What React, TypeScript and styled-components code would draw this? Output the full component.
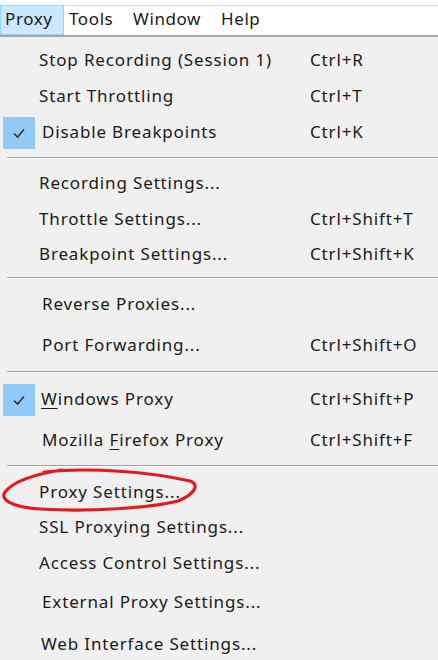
import React from "react";
import styled, { createGlobalStyle } from "styled-components";

const GlobalStyle = createGlobalStyle`
  html, body {
    margin: 0;
    padding: 0;
    background: #ffffff;
  }
  body {
    font-family: "Noto Sans", "Open Sans", sans-serif;
    color: #1a1a1a;
  }
`;

const Page = styled.div`
  width: 438px;
  height: 660px;
  overflow: hidden;
  background: #ffffff;
  padding-top: 5px;
  box-sizing: border-box;
`;

const MenuBar = styled.div`
  display: flex;
  align-items: stretch;
  height: 29px;
  border-top: 1px solid #dadada;
  border-bottom: 2px solid #a8a8a8;
  background: #ffffff;
`;

const MenuBarItem = styled.div<{ active?: boolean; w: number }>`
  display: flex;
  align-items: center;
  width: ${(p) => p.w}px;
  padding: 0 0 3px 4px;
  box-sizing: border-box;
  font-size: 17px;
  letter-spacing: 0.6px;
  background: ${(p) => (p.active ? "#cce8ff" : "transparent")};
  border: 1px solid ${(p) => (p.active ? "#99d1ff" : "transparent")};
  margin-top: -1px;
`;

const Panel = styled.div`
  background: #f0f0f0;
  padding-top: 6px;
  height: 100%;
`;

const Row = styled.div<{ h: number }>`
  position: relative;
  display: flex;
  align-items: center;
  height: ${(p) => p.h}px;
  font-size: 17px;
  letter-spacing: 0.85px;
`;

const CheckSlot = styled.div<{ checked?: boolean }>`
  flex: none;
  width: 32px;
  height: 32px;
  margin: 0 4px 0 3px;
  display: flex;
  align-items: center;
  justify-content: center;
  background: ${(p) => (p.checked ? "#91c9f7" : "transparent")};
`;

const Label = styled.div<{ shift: number }>`
  width: 271px;
  padding: 0 0 3px ${(p) => p.shift}px;
  box-sizing: border-box;
  white-space: nowrap;
`;

const Shortcut = styled.div`
  white-space: nowrap;
  padding-bottom: 3px;
`;

const Mnemonic = styled.span`
  text-decoration: underline;
  text-underline-offset: 3px;
`;

const Separator = styled.div<{ top: number; bottom: number }>`
  margin: ${(p) => p.top}px 0 ${(p) => p.bottom}px 7px;
  border-top: 1px solid #a0a0a0;
  border-bottom: 1px solid #ffffff;
`;

const Annotation = styled.svg`
  position: absolute;
  left: 0;
  top: -8px;
  pointer-events: none;
`;

type Item = {
  label: React.ReactNode;
  keys?: string;
  h: number;
  shift?: number;
  checked?: boolean;
  circled?: boolean;
};

type Section = { items: Item[]; sepTop?: number; sepBottom?: number };

const sections: Section[] = [
  {
    items: [
      { label: "Stop Recording (Session 1)", keys: "Ctrl+R", h: 36 },
      { label: "Start Throttling", keys: "Ctrl+T", h: 35 },
      { label: "Disable Breakpoints", keys: "Ctrl+K", h: 38, shift: 3, checked: true },
    ],
    sepTop: 5,
    sepBottom: 6,
  },
  {
    items: [
      { label: "Recording Settings...", h: 38 },
      { label: "Throttle Settings...", keys: "Ctrl+Shift+T", h: 33 },
      { label: "Breakpoint Settings...", keys: "Ctrl+Shift+K", h: 38 },
    ],
    sepTop: 3,
    sepBottom: 8,
  },
  {
    items: [
      { label: "Reverse Proxies...", h: 36, shift: 3 },
      { label: "Port Forwarding...", keys: "Ctrl+Shift+O", h: 46, shift: 3 },
    ],
    sepTop: 2,
    sepBottom: 8,
  },
  {
    items: [
      {
        label: (
          <>
            <Mnemonic>W</Mnemonic>indows Proxy
          </>
        ),
        keys: "Ctrl+Shift+P",
        h: 38,
        shift: 2,
        checked: true,
      },
      {
        label: (
          <>
            Mozilla <Mnemonic>F</Mnemonic>irefox Proxy
          </>
        ),
        keys: "Ctrl+Shift+F",
        h: 44,
        shift: 3,
      },
    ],
    sepTop: 2,
    sepBottom: 6,
  },
  {
    items: [
      { label: "Proxy Settings...", h: 40, circled: true },
      { label: "SSL Proxying Settings...", h: 30 },
      { label: "Access Control Settings...", h: 42 },
      { label: "External Proxy Settings...", h: 36, shift: 3 },
      { label: "Web Interface Settings...", h: 48, shift: 2 },
    ],
  },
];

const CheckMark = () => (
  <svg width="14" height="12" viewBox="0 0 14 12">
    <path d="M2 6.5 L5.5 10 L12 2.5" fill="none" stroke="#333" strokeWidth="1.6" />
  </svg>
);

const RedCircle = () => (
  <Annotation width="210" height="52" viewBox="0 464 210 52">
    <path
      d="M44 471 C 90 466, 150 471, 190 480 C 201 484, 193 494, 178 500 C 150 507, 90 511, 40 508 C 10 506, 0 498, 5 491 C 12 482, 30 474, 62 469"
      fill="none"
      stroke="#e31b1f"
      strokeWidth="3.2"
      strokeLinecap="round"
    />
  </Annotation>
);

const menus = [
  { name: "Proxy", w: 64, active: true },
  { name: "Tools", w: 64 },
  { name: "Window", w: 88 },
  { name: "Help", w: 60 },
];

export default function App() {
  return (
    <Page>
      <GlobalStyle />
      <MenuBar>
        {menus.map((m) => (
          <MenuBarItem key={m.name} w={m.w} active={m.active}>
            {m.name}
          </MenuBarItem>
        ))}
      </MenuBar>
      <Panel>
        {sections.map((section, si) => (
          <React.Fragment key={si}>
            {section.items.map((item, ii) => (
              <Row key={ii} h={item.h}>
                {item.circled && <RedCircle />}
                <CheckSlot checked={item.checked}>{item.checked && <CheckMark />}</CheckSlot>
                <Label shift={item.shift ?? 0}>{item.label}</Label>
                {item.keys && <Shortcut>{item.keys}</Shortcut>}
              </Row>
            ))}
            {si < sections.length - 1 && (
              <Separator top={section.sepTop ?? 4} bottom={section.sepBottom ?? 6} />
            )}
          </React.Fragment>
        ))}
      </Panel>
    </Page>
  );
}
